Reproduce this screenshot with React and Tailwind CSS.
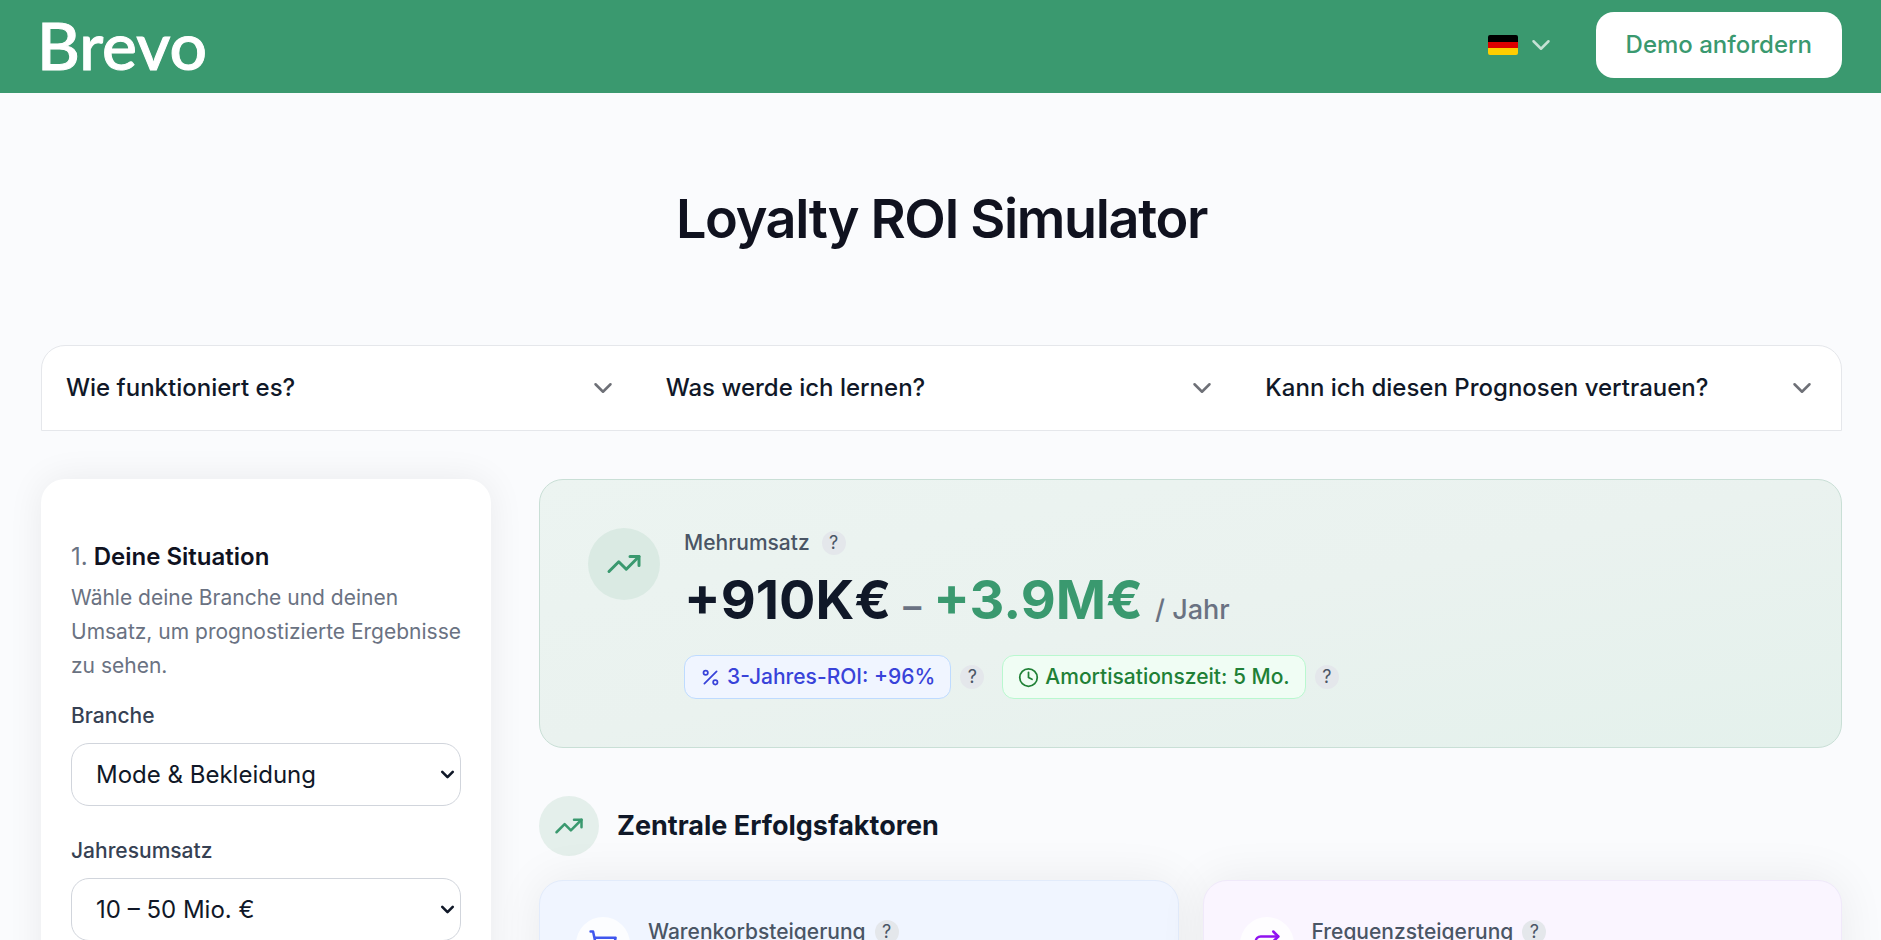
import { useState } from 'react';
import { ChevronDown, TrendingUp, Percent, Clock, ShoppingCart, Repeat } from 'lucide-react';

const QUESTIONS = ['Wie funktioniert es?', 'Was werde ich lernen?', 'Kann ich diesen Prognosen vertrauen?'];
const INDUSTRIES = ['Mode & Bekleidung', 'Beauty & Kosmetik', 'Lebensmittel', 'Elektronik'];
const REVENUES = ['1 – 10 Mio. €', '10 – 50 Mio. €', '50 – 100 Mio. €'];

function Help({ label }) {
  return (
    <button
      type="button"
      aria-label={label}
      className="flex size-6 shrink-0 items-center justify-center rounded-full bg-[#e4e7eb] text-[18px] leading-none text-gray-600"
    >
      ?
    </button>
  );
}

function GermanFlag() {
  return (
    <svg viewBox="0 0 30 20" className="h-5 w-[30px] rounded-xs" aria-hidden="true">
      <rect width="30" height="7" fill="#000" />
      <rect y="7" width="30" height="6" fill="#d00" />
      <rect y="13" width="30" height="7" fill="#ffce00" />
    </svg>
  );
}

function Header() {
  return (
    <header className="bg-[#3a996f]">
      <div className="flex h-[93px] items-center justify-between pr-[39px] pb-1 pl-[41px]">
        <a href="#" className="-ml-1 font-[Lato,sans-serif] text-[66px] leading-none font-medium text-white [-webkit-text-stroke:1px_white]">Brevo</a>
        <div className="flex items-center gap-10">
          <button type="button" aria-label="Sprache" className="flex items-center gap-2">
            <GermanFlag />
            <ChevronDown size={30} strokeWidth={2} className="text-white/70" />
          </button>
          <a href="#" className="rounded-[18px] bg-white px-[30px] py-[15px] text-2xl leading-9 font-medium text-[#3a996f]">
            Demo anfordern
          </a>
        </div>
      </div>
    </header>
  );
}

function SelectField({ id, label, options, value, onChange }) {
  return (
    <div>
      <label htmlFor={id} className="mb-3 block text-[21px] leading-[30px] font-medium text-gray-700">{label}</label>
      <div className="relative">
        <select
          id={id}
          value={value}
          onChange={e => onChange(e.target.value)}
          className="h-[63px] w-full appearance-none rounded-[18px] border border-gray-300 bg-white px-6 text-2xl text-gray-900"
        >
          {options.map(o => <option key={o}>{o}</option>)}
        </select>
        <ChevronDown size={21} strokeWidth={3} className="pointer-events-none absolute inset-y-0 right-[3px] my-auto" />
      </div>
    </div>
  );
}

function DriverCard({ title, icon: Icon, cardClass, iconClass }) {
  return (
    <div className={`flex min-h-60 gap-[18px] rounded-3xl border p-9 shadow-[0_0_48px_rgba(0,0,0,0.07)] ${cardClass}`}>
      <div className="flex size-[54px] shrink-0 items-center justify-center rounded-full bg-white/80">
        <Icon size={30} className={iconClass} />
      </div>
      <div className="flex h-[30px] items-center gap-[9px]">
        <h3 className="text-[21px] leading-[30px] font-medium text-gray-600">{title}</h3>
        <Help label={`Info ${title}`} />
      </div>
    </div>
  );
}

export default function App() {
  const [industry, setIndustry] = useState(INDUSTRIES[0]);
  const [revenue, setRevenue] = useState(REVENUES[1]);

  return (
    <div className="min-h-screen bg-[#fafbfd] font-[Inter,sans-serif] text-gray-900">
      <Header />

      <main className="pr-[39px] pl-[41px]">
        <h1 className="pt-[93px] pb-[93px] text-center text-[54px] leading-[66px] font-semibold tracking-tight text-[#10121f]">
          Loyalty ROI Simulator
        </h1>

        <div className="grid grid-cols-3 rounded-t-3xl border border-gray-200 bg-white">
          {QUESTIONS.map(q => (
            <button key={q} type="button" className="flex items-center justify-between px-6 py-6 text-2xl leading-9 font-medium">
              {q}
              <ChevronDown size={30} className="text-[#6e7077]" />
            </button>
          ))}
        </div>

        <div className="mt-12 flex items-start gap-12">
          <aside className="min-h-[660px] w-[450px] shrink-0 rounded-3xl bg-white px-[30px] pt-[60px] shadow-[0_0_36px_rgba(0,0,0,0.07)]">
            <h2 className="text-2xl leading-9 font-semibold text-[#10121f]">
              <span className="font-normal text-gray-500">1.</span> Deine Situation
            </h2>
            <p className="mt-[6px] mb-[18px] text-[21px] leading-[34px] text-gray-500">
              Wähle deine Branche und deinen Umsatz, um prognostizierte Ergebnisse zu sehen.
            </p>
            <div className="flex flex-col gap-[30px]">
              <SelectField id="industry" label="Branche" options={INDUSTRIES} value={industry} onChange={setIndustry} />
              <SelectField id="revenue" label="Jahresumsatz" options={REVENUES} value={revenue} onChange={setRevenue} />
            </div>
          </aside>

          <div className="min-w-0 flex-1">
            <section className="flex gap-6 rounded-3xl border border-[#c9dfd6] bg-linear-to-br from-[#ecf4f1] via-[#eaf2ef] to-[#e4f1ec] p-12">
              <div className="flex size-[72px] shrink-0 items-center justify-center rounded-full bg-[#daeae3]">
                <TrendingUp size={36} className="text-[#3a996f]" />
              </div>
              <div>
                <div className="flex items-center gap-3">
                  <h2 className="text-[21px] leading-[30px] font-medium text-gray-600">Mehrumsatz</h2>
                  <Help label="Info Mehrumsatz" />
                </div>
                <p className="mt-3 mb-[15px] flex items-baseline gap-3 text-[54px] leading-[60px] font-bold">
                  <span>+910K€</span>
                  <span className="text-[36px] font-semibold text-gray-500">–</span>
                  <span className="text-[#3a996f]">+3.9M€</span>
                  <span className="text-[27px] font-medium text-gray-500">/ Jahr</span>
                </p>
                <div className="flex items-center gap-[9px]">
                  <span className="flex items-center gap-[6px] rounded-xl border border-blue-200 bg-[#f0f5ff] px-[15px] py-[6px] text-[21px] leading-[30px] font-medium text-[#3843d9]">
                    <Percent size={21} />
                    3-Jahres-ROI: +96%
                  </span>
                  <Help label="Info ROI" />
                  <span className="ml-[9px] flex items-center gap-[6px] rounded-xl border border-green-200 bg-green-50 px-[15px] py-[6px] text-[21px] leading-[30px] font-medium text-[#208036]">
                    <Clock size={21} />
                    Amortisationszeit: 5 Mo.
                  </span>
                  <Help label="Info Amortisationszeit" />
                </div>
              </div>
            </section>

            <div className="mt-12 mb-6 flex items-center gap-[18px]">
              <div className="flex size-[60px] items-center justify-center rounded-full bg-[#e4efeb]">
                <TrendingUp size={30} className="text-[#3a996f]" />
              </div>
              <h2 className="text-[27px] leading-9 font-bold">Zentrale Erfolgsfaktoren</h2>
            </div>

            <div className="grid grid-cols-2 gap-6">
              <DriverCard
                title="Warenkorbsteigerung"
                icon={ShoppingCart}
                cardClass="border-[#e2ebfb] bg-[#f0f5ff]"
                iconClass="text-[#3f56ee]"
              />
              <DriverCard
                title="Frequenzsteigerung"
                icon={Repeat}
                cardClass="border-[#f0e9fa] bg-[#faf5ff]"
                iconClass="text-[#9012f0]"
              />
            </div>
          </div>
        </div>
      </main>
    </div>
  );
}
